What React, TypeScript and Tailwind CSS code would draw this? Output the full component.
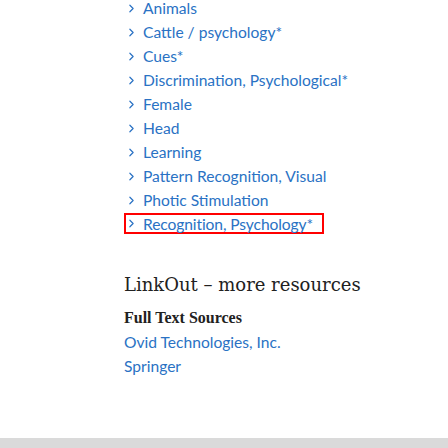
import { ChevronRight } from 'lucide-react';

const terms = [
    'Animals',
    'Cattle / psychology*',
    'Cues*',
    'Discrimination, Psychological*',
    'Female',
    'Head',
    'Learning',
    'Pattern Recognition, Visual',
    'Photic Stimulation',
];

export default function App() {
    return (
        <div className="flex h-[448px] w-[448px] flex-col bg-white font-['Lato',sans-serif]">
            <div className="flex-1 pl-[124px]">
                <ul className="-mt-[4px] flex flex-col">
                    {terms.map((term) => (
                        <li
                            key={term}
                            className="flex h-[24px] items-center gap-[5px] pl-[1px] text-[15.6px] leading-[16px] text-[#2a72c4]"
                        >
                            <ChevronRight size={13} strokeWidth={2.2} className="shrink-0" />
                            <span>{term}</span>
                        </li>
                    ))}
                    <li className="mt-[1px] flex h-[21px] w-[200px] items-center gap-[5px] border-2 border-[#ff0000] text-[15.6px] leading-[16px] text-[#2a72c4]">
                        <ChevronRight size={13} strokeWidth={2.2} className="shrink-0 -ml-[1px]" />
                        <span className="whitespace-nowrap tracking-[-0.1px]">Recognition, Psychology*</span>
                    </li>
                </ul>
                <h2 className="mt-[39px] font-['DejaVu_Serif',serif] text-[18px] leading-[24px] text-[#212121]">
                    LinkOut – more resources
                </h2>
                <h3 className="mt-[9px] font-['Liberation_Serif',serif] text-[16px] font-bold leading-[24px] text-[#212121]">
                    Full Text Sources
                </h3>
                <ul className="flex flex-col text-[15.6px] text-[#2a72c4]">
                    <li className="h-[24px] leading-[24px]">Ovid Technologies, Inc.</li>
                    <li className="h-[24px] leading-[24px]">Springer</li>
                </ul>
            </div>
            <div className="h-[10px] bg-[#dadada]" />
        </div>
    );
}
